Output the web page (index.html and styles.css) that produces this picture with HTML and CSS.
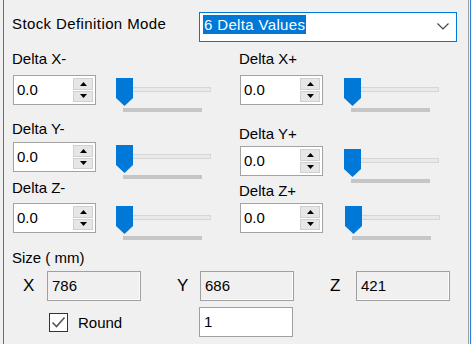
FILE: index.html
```html
<!DOCTYPE html>
<html lang="en">
<head>
    <meta charset="UTF-8">
    <meta name="viewport" content="width=device-width, initial-scale=1.0">
    <title>Stock Definition</title>
    <link rel="stylesheet" href="styles.css">
</head>
<body>
    <div class="panel">
        <div class="mode-row">
            <span class="mode-label">Stock Definition Mode</span>
            <div class="combo">
                <span class="combo-text">6 Delta Values</span>
                <svg class="chevron" width="12" height="7" viewBox="0 0 12 7"><path d="M0.5 0.5 L6 6 L11.5 0.5" fill="none" stroke="#444" stroke-width="1.2"/></svg>
            </div>
        </div>

        <div class="deltas">
            <div class="col">
                <div class="field">
                    <div class="field-label gap8">Delta X-</div>
                    <div class="ctrl">
                        <div class="spin">
                            <span class="spin-val">0.0</span>
                            <div class="spin-btns">
                                <span class="spin-btn"><svg width="7" height="4" viewBox="0 0 7 4"><path d="M0 4 L3.5 0 L7 4 Z" fill="#000"/></svg></span>
                                <span class="spin-btn"><svg width="7" height="4" viewBox="0 0 7 4"><path d="M0 0 L3.5 4 L7 0 Z" fill="#000"/></svg></span>
                            </div>
                        </div>
                        <div class="slider">
                            <div class="track"></div>
                            <div class="ticks"></div>
                            <svg class="thumb" width="18" height="28" viewBox="0 0 18 28"><path d="M0 0 H17 V20 L8.5 28 L0 20 Z" fill="#0078d7"/></svg>
                        </div>
                    </div>
                </div>
                <div class="field ym">
                    <div class="field-label gap5">Delta Y-</div>
                    <div class="ctrl">
                        <div class="spin">
                            <span class="spin-val">0.0</span>
                            <div class="spin-btns">
                                <span class="spin-btn"><svg width="7" height="4" viewBox="0 0 7 4"><path d="M0 4 L3.5 0 L7 4 Z" fill="#000"/></svg></span>
                                <span class="spin-btn"><svg width="7" height="4" viewBox="0 0 7 4"><path d="M0 0 L3.5 4 L7 0 Z" fill="#000"/></svg></span>
                            </div>
                        </div>
                        <div class="slider">
                            <div class="track"></div>
                            <div class="ticks"></div>
                            <svg class="thumb" width="18" height="28" viewBox="0 0 18 28"><path d="M0 0 H17 V20 L8.5 28 L0 20 Z" fill="#0078d7"/></svg>
                        </div>
                    </div>
                </div>
                <div class="field">
                    <div class="field-label gap7">Delta Z-</div>
                    <div class="ctrl">
                        <div class="spin">
                            <span class="spin-val">0.0</span>
                            <div class="spin-btns">
                                <span class="spin-btn"><svg width="7" height="4" viewBox="0 0 7 4"><path d="M0 4 L3.5 0 L7 4 Z" fill="#000"/></svg></span>
                                <span class="spin-btn"><svg width="7" height="4" viewBox="0 0 7 4"><path d="M0 0 L3.5 4 L7 0 Z" fill="#000"/></svg></span>
                            </div>
                        </div>
                        <div class="slider">
                            <div class="track"></div>
                            <div class="ticks"></div>
                            <svg class="thumb" width="18" height="28" viewBox="0 0 18 28"><path d="M0 0 H17 V20 L8.5 28 L0 20 Z" fill="#0078d7"/></svg>
                        </div>
                    </div>
                </div>
            </div>

            <div class="col">
                <div class="field">
                    <div class="field-label gap8">Delta X+</div>
                    <div class="ctrl">
                        <div class="spin">
                            <span class="spin-val">0.0</span>
                            <div class="spin-btns">
                                <span class="spin-btn"><svg width="7" height="4" viewBox="0 0 7 4"><path d="M0 4 L3.5 0 L7 4 Z" fill="#000"/></svg></span>
                                <span class="spin-btn"><svg width="7" height="4" viewBox="0 0 7 4"><path d="M0 0 L3.5 4 L7 0 Z" fill="#000"/></svg></span>
                            </div>
                        </div>
                        <div class="slider right">
                            <div class="track"></div>
                            <div class="ticks"></div>
                            <svg class="thumb" width="18" height="28" viewBox="0 0 18 28"><path d="M0 0 H17 V20 L8.5 28 L0 20 Z" fill="#0078d7"/></svg>
                        </div>
                    </div>
                </div>
                <div class="field yp">
                    <div class="field-label gap4">Delta Y+</div>
                    <div class="ctrl">
                        <div class="spin">
                            <span class="spin-val">0.0</span>
                            <div class="spin-btns">
                                <span class="spin-btn"><svg width="7" height="4" viewBox="0 0 7 4"><path d="M0 4 L3.5 0 L7 4 Z" fill="#000"/></svg></span>
                                <span class="spin-btn"><svg width="7" height="4" viewBox="0 0 7 4"><path d="M0 0 L3.5 4 L7 0 Z" fill="#000"/></svg></span>
                            </div>
                        </div>
                        <div class="slider right">
                            <div class="track"></div>
                            <div class="ticks"></div>
                            <svg class="thumb" width="18" height="28" viewBox="0 0 18 28"><path d="M0 0 H17 V20 L8.5 28 L0 20 Z" fill="#0078d7"/></svg>
                        </div>
                    </div>
                </div>
                <div class="field zp">
                    <div class="field-label gap4">Delta Z+</div>
                    <div class="ctrl">
                        <div class="spin">
                            <span class="spin-val">0.0</span>
                            <div class="spin-btns">
                                <span class="spin-btn"><svg width="7" height="4" viewBox="0 0 7 4"><path d="M0 4 L3.5 0 L7 4 Z" fill="#000"/></svg></span>
                                <span class="spin-btn"><svg width="7" height="4" viewBox="0 0 7 4"><path d="M0 0 L3.5 4 L7 0 Z" fill="#000"/></svg></span>
                            </div>
                        </div>
                        <div class="slider right shifted">
                            <div class="track"></div>
                            <div class="ticks"></div>
                            <svg class="thumb" width="18" height="28" viewBox="0 0 18 28"><path d="M0 0 H17 V20 L8.5 28 L0 20 Z" fill="#0078d7"/></svg>
                        </div>
                    </div>
                </div>
            </div>
        </div>

        <div class="size">
            <div class="size-label">Size ( mm)</div>
            <div class="size-row">
                <span class="axis ax-x">X</span>
                <div class="box">786</div>
                <span class="axis ax-y">Y</span>
                <div class="box">686</div>
                <span class="axis ax-z">Z</span>
                <div class="box">421</div>
            </div>
            <div class="round-row">
                <label class="round">
                    <span class="check"><svg width="15" height="13" viewBox="0 0 15 13"><path d="M1.5 6.5 L5.5 10.5 L13.5 1.5" fill="none" stroke="#555" stroke-width="1.6"/></svg></span>
                    Round
                </label>
                <div class="box white">1</div>
            </div>
        </div>
    </div>
</body>
</html>
```

FILE: styles.css
```css
body{
    margin: 0;
    background: #f0f0f0;
    font-family: "Liberation Sans", Arial, sans-serif;
    font-size: 15px;
    color: #000;
}
.panel{
    margin-left: 3px;
    width: 468px;
    height: 344px;
    box-sizing: border-box;
    border-left: 1px solid #2a7bd4;
    border-right: 1px solid #2a7bd4;
    box-shadow: inset -1px 0 0 #f0f0f0, inset -2px 0 0 #a0a0a0;
    padding: 12px 0 0 8px;
}

/* top row */
.mode-row{
    display: flex;
    height: 30px;
}
.mode-label{
    width: 187px;
    line-height: 17px;
    padding-top: 3px;
    letter-spacing: 0.4px;
}
.combo{
    width: 258px;
    height: 30px;
    box-sizing: border-box;
    border: 1px solid #0078d7;
    background: #fff;
    display: flex;
    justify-content: space-between;
    align-items: flex-start;
    padding-left: 3px;
}
.combo-text{
    margin-top: 2px;
    background: #0078d7;
    color: #fff;
    line-height: 19px;
    padding: 0 1px;
    letter-spacing: 0.35px;
}
.chevron{
    margin: 10px 7px 0 0;
}

/* delta grid */
.deltas{
    display: grid;
    grid-template-columns: 227px 1fr;
    margin-top: 8px;
}
.col{
    display: flex;
    flex-direction: column;
}
.field-label{
    line-height: 17px;
}
.gap8{ margin-bottom: 8px; }
.gap7{ margin-bottom: 7px; }
.gap5{ margin-bottom: 5px; }
.gap4{ margin-bottom: 4px; }
.ym{ margin-top: 8px; }
.yp{ margin-top: 13px; }
.zp{ margin-top: -1px; }

.ctrl{
    display: flex;
    align-items: flex-start;
}
.spin{
    width: 83px;
    height: 30px;
    box-sizing: border-box;
    margin-left: 1px;
    border: 1px solid #a3a3a3;
    background: #fff;
    display: flex;
}
.spin-val{
    flex: 1;
    padding-left: 3px;
    line-height: 28px;
}
.spin-btns{
    width: 20px;
    display: flex;
    flex-direction: column;
    gap: 1px;
    padding: 2px 2px 2px 0;
}
.spin-btn{
    flex: 1;
    background: #e6e6e6;
    border: 1px solid #d0d0d0;
    display: flex;
    align-items: center;
    justify-content: center;
}

.slider{
    position: relative;
    width: 95px;
    height: 34px;
    margin: 3px 0 0 20px;
}
.slider.right{
    margin-left: 21px;
}
.slider.shifted{
    margin-left: 22px;
}
.track{
    margin: 9px 0 0 8px;
    width: 85px;
    height: 3px;
    background: #e7eaea;
    border: 1px solid #d6d6d6;
}
.ticks{
    margin: 16px 0 0 7px;
    width: 79px;
    height: 4px;
    background: #c6c6c6;
}
.thumb{
    position: absolute;
    top: 0;
    left: 0;
}

/* size section */
.size-label{
    margin-top: 9px;
    line-height: 17px;
}
.size-row{
    display: flex;
    align-items: center;
    margin-top: 5px;
    height: 30px;
}
.axis{
    font-size: 17px;
}
.ax-x{
    margin-left: 11px;
    width: 24px;
}
.ax-y{
    margin-left: 36px;
    width: 23px;
}
.ax-z{
    margin-left: 36px;
    width: 26px;
}
.box{
    width: 94px;
    height: 30px;
    box-sizing: border-box;
    border: 1px solid #a0a0a0;
    box-shadow: inset -1px -1px 0 #fdfdfd;
    background: #f0f0f0;
    padding-left: 4px;
    line-height: 28px;
}
.box.white{
    background: #fff;
}
.round-row{
    display: flex;
    margin-top: 6px;
}
.round{
    width: 187px;
    box-sizing: border-box;
    padding-left: 37px;
    display: flex;
    align-items: center;
    gap: 10px;
}
.check{
    width: 19px;
    height: 19px;
    box-sizing: border-box;
    border: 1px solid #333;
    background: #fff;
    display: flex;
    align-items: center;
    justify-content: center;
}
```
